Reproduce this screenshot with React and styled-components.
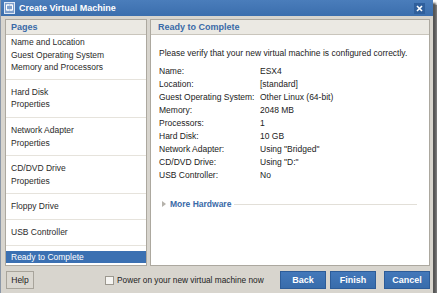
import React from 'react';
import styled, { createGlobalStyle } from 'styled-components';

const Global = createGlobalStyle`
  html, body { margin: 0; padding: 0; background: #ffffff; }
  body { font-family: "Liberation Sans", Arial, sans-serif; font-size: 8.5px; color: #222; }
`;

const Window = styled.div`
  width: 432px;
  height: 293px;
  display: flex;
  flex-direction: column;
  background: #d8d5ce;
  box-shadow: 3px 3px 2px #555, 5px 5px 1px #888;
  border-left: 1px solid #8c98a8;
`;

const TitleBar = styled.div`
  height: 16px;
  display: flex;
  align-items: center;
  gap: 4px;
  padding: 0 8px 0 3px;
  background: linear-gradient(#4a7dbb, #3b6ead);
  color: #fff;
  font-weight: bold;
  font-size: 9px;
`;

const Title = styled.span`
  flex: 1;
`;

const Close = styled.div`
  width: 11px;
  height: 11px;
  background: #2f5f9c;
  display: flex;
  align-items: center;
  justify-content: center;
`;

const Body = styled.div`
  flex: 1;
  display: flex;
  flex-direction: column;
  padding: 3px 3px 4px 4px;
  gap: 5px;
`;

const Panels = styled.div`
  flex: 1;
  display: grid;
  grid-template-columns: 142px 1fr;
  gap: 3px;
`;

const Panel = styled.div`
  display: flex;
  flex-direction: column;
  border: 1px solid #aca89f;
  background: #fff;
`;

const PanelHead = styled.div`
  height: 14px;
  display: flex;
  align-items: center;
  padding-left: ${(p) => p.pad || 5}px;
  background: #ebe9e3;
  border-bottom: 1px solid #c9c5bc;
  color: #3a6aa8;
  font-weight: bold;
  font-size: 9px;
`;

const Group = styled.div`
  padding: ${(p) => (p.first ? '1px 0 5px' : p.last ? '5px 0 0' : '6px 0 6px')};
  border-bottom: ${(p) => (p.last ? 'none' : '1px solid #e6e3dc')};
`;

const Item = styled.div`
  height: 12.6px;
  line-height: 12.6px;
  padding-left: 5px;
  background: ${(p) => (p.active ? '#3b70b2' : 'transparent')};
  color: ${(p) => (p.active ? '#fff' : '#2a2a2a')};
`;

const Content = styled.div`
  padding: 12px 8px 0 8px;
`;

const Intro = styled.div`
  margin-bottom: 6px;
  line-height: 12px;
`;

const Rows = styled.div`
  display: grid;
  grid-template-columns: 101px 1fr;
  grid-auto-rows: 12.9px;
  align-items: center;
`;

const MoreRow = styled.div`
  display: flex;
  align-items: center;
  margin: 18px 4px 0 3px;
  gap: 3px;
  color: #3a6aa8;
  font-weight: bold;
`;

const Rule = styled.div`
  flex: 1;
  height: 1px;
  background: #e2dfd8;
`;

const Footer = styled.div`
  height: 18px;
  display: flex;
  align-items: center;
  gap: 4px;
`;

const Button = styled.button`
  height: 18px;
  width: ${(p) => p.w || 46}px;
  margin-left: ${(p) => p.ml || 0}px;
  border: 1px solid ${(p) => (p.primary ? '#2d5c98' : '#a8a49b')};
  background: ${(p) => (p.primary ? 'linear-gradient(#4378ba, #386cab)' : '#dad7d0')};
  color: ${(p) => (p.primary ? '#fff' : '#222')};
  font-family: "Liberation Sans", Arial, sans-serif;
  font-size: ${(p) => (p.primary ? 9 : 8.5)}px;
  font-weight: ${(p) => (p.primary ? 'bold' : 'normal')};
  padding: 0;
`;

const Check = styled.label`
  display: flex;
  align-items: center;
  gap: 3px;
  margin-left: 67px;
  margin-right: auto;
  font-size: 8.3px;
`;

const Box = styled.span`
  width: 7px;
  height: 7px;
  border: 1px solid #9c988f;
  background: #f6f5f2;
`;

const groups = [
  ['Name and Location', 'Guest Operating System', 'Memory and Processors'],
  ['Hard Disk', 'Properties'],
  ['Network Adapter', 'Properties'],
  ['CD/DVD Drive', 'Properties'],
  ['Floppy Drive'],
  ['USB Controller'],
];

const summary = [
  ['Name:', 'ESX4'],
  ['Location:', '[standard]'],
  ['Guest Operating System:', 'Other Linux (64-bit)'],
  ['Memory:', '2048 MB'],
  ['Processors:', '1'],
  ['Hard Disk:', '10 GB'],
  ['Network Adapter:', 'Using "Bridged"'],
  ['CD/DVD Drive:', 'Using "D:"'],
  ['USB Controller:', 'No'],
];

const VmIcon = () => (
  <svg width="11" height="12" viewBox="0 0 11 12">
    <rect x="0.5" y="0.5" width="10" height="11" fill="#7d9fcc" stroke="#dfe8f4" />
    <rect x="2.5" y="3" width="6" height="5" fill="none" stroke="#fff" />
    <path d="M4 2v2M7 2v2M4 7v2M7 7v2" stroke="#fff" />
  </svg>
);

const App = () => (
  <>
    <Global />
    <Window>
      <TitleBar>
        <VmIcon />
        <Title>Create Virtual Machine</Title>
        <Close>
          <svg width="7" height="7" viewBox="0 0 7 7">
            <path d="M1 1l5 5M6 1L1 6" stroke="#fff" strokeWidth="1.6" />
          </svg>
        </Close>
      </TitleBar>
      <Body>
        <Panels>
          <Panel>
            <PanelHead>Pages</PanelHead>
            {groups.map((g, i) => (
              <Group key={i} first={i === 0}>
                {g.map((t, j) => (
                  <Item key={j}>{t}</Item>
                ))}
              </Group>
            ))}
            <Group last>
              <Item active>Ready to Complete</Item>
            </Group>
          </Panel>
          <Panel>
            <PanelHead pad={7}>Ready to Complete</PanelHead>
            <Content>
              <Intro>Please verify that your new virtual machine is configured correctly.</Intro>
              <Rows>
                {summary.map(([k, v]) => (
                  <React.Fragment key={k}>
                    <span>{k}</span>
                    <span>{v}</span>
                  </React.Fragment>
                ))}
              </Rows>
              <MoreRow>
                <svg width="5" height="6" viewBox="0 0 5 6">
                  <path d="M0 0l4 3-4 3z" fill="#b5b2ab" />
                </svg>
                <span>More Hardware</span>
                <Rule />
              </MoreRow>
            </Content>
          </Panel>
        </Panels>
        <Footer>
          <Button w={28} ml={1}>Help</Button>
          <Check>
            <Box />
            <span>Power on your new virtual machine now</span>
          </Check>
          <Button primary>Back</Button>
          <Button primary>Finish</Button>
          <Button primary ml={4}>Cancel</Button>
        </Footer>
      </Body>
    </Window>
  </>
);

export default App;
